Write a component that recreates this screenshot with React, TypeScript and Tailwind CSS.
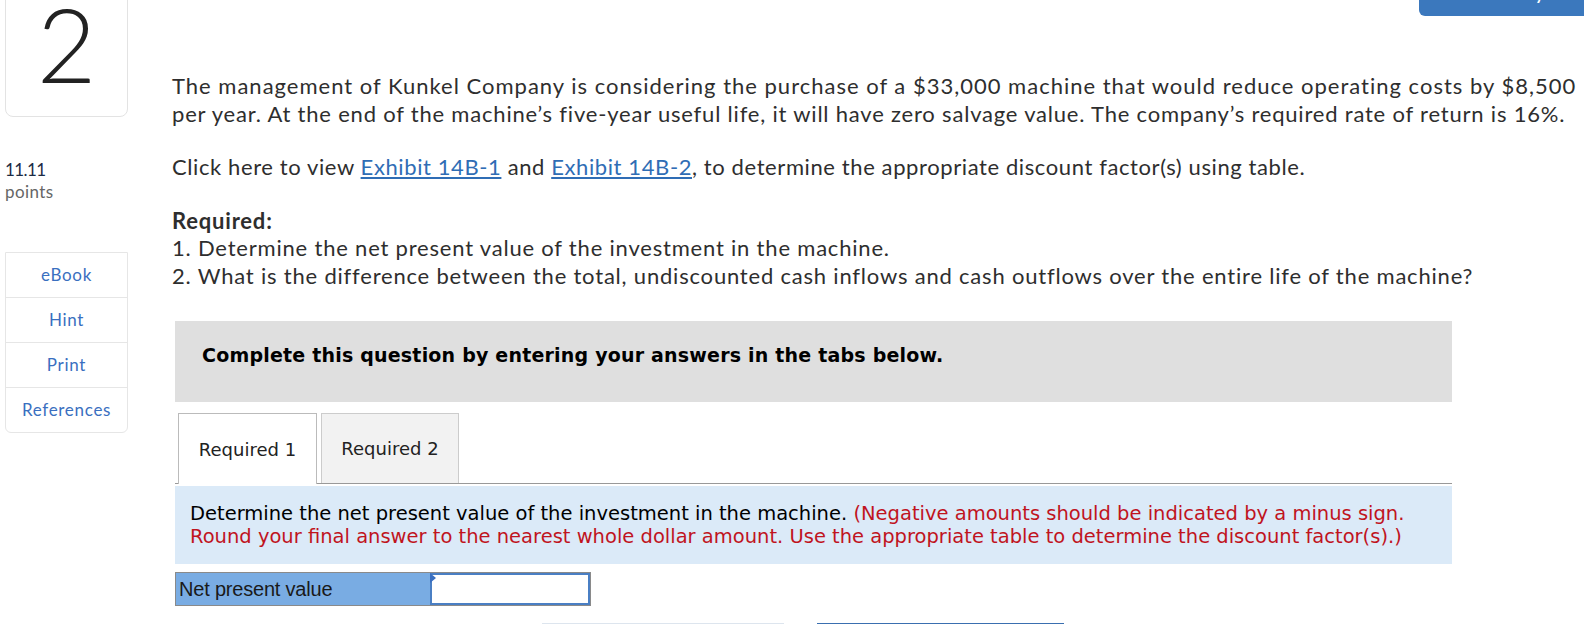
import React from "react";

const sideLinks = ["eBook", "Hint", "Print", "References"];

const QuestionCard = () => (
  <div className="flex flex-col w-[123px]">
    <div className="-mt-[39px] h-[140px] rounded-b-[8px] border border-[#e3e3e3] flex items-end justify-center pb-[21px]">
      <span className="font-['Lato',sans-serif] font-light text-[103px] leading-none text-[#222]">2</span>
    </div>
    <div className="mt-[42px] font-['Lato',sans-serif] text-[17px] leading-[22px]">
      <div className="text-[#1c2b45] tracking-[-0.6px]">11.11</div>
      <div className="text-[#666] tracking-[0.4px]">points</div>
    </div>
    <div className="mt-[49px] border border-[#e6e6e6] rounded-b-[6px] flex flex-col font-['Lato',sans-serif] text-[17px] tracking-[0.7px] text-[#3a6fc0]">
      {sideLinks.map((l, i) => (
        <div
          key={l}
          className={
            i < sideLinks.length - 1
              ? "h-[45px] flex items-center justify-center border-b border-[#e6e6e6]"
              : "h-[44px] flex items-center justify-center"
          }
        >
          {l}
        </div>
      ))}
    </div>
  </div>
);

const Tabs = () => (
  <div className="mt-[11px] flex items-end pl-[3px] border-b border-[#999] h-[71px] font-['DejaVu_Sans',Verdana,sans-serif] text-[18px] text-[#222]">
    <div className="w-[139px] h-[71px] -mb-px bg-white border border-b-0 border-[#bbb] flex items-center justify-center">
      Required 1
    </div>
    <div className="ml-[4px] w-[138px] h-[70px] bg-[#f2f2f2] border border-b-0 border-[#ccc] flex items-center justify-center">
      Required 2
    </div>
  </div>
);

const Question = () => (
  <div className="flex flex-col flex-1">
    <div className="pt-[56px] font-['Lato',sans-serif] text-[22px] leading-[28px] tracking-[0.8px] text-[#2e2e2e]">
      <p>
        <span className="tracking-[1px]">
          The management of Kunkel Company is considering the purchase of a $33,000 machine that would reduce operating costs by $8,500
        </span>
        <br />
        per year. At the end of the machine’s five-year useful life, it will have zero salvage value. The company’s required rate of return is 16%.
      </p>
      <p className="mt-[25px] tracking-[0.6px]">
        Click here to view <span className="text-[#2f6db5] underline underline-offset-2">Exhibit 14B-1</span> and{" "}
        <span className="text-[#2f6db5] underline underline-offset-2">Exhibit 14B-2</span>, to determine the appropriate discount factor(s) using table.
      </p>
      <p className="mt-[27px] leading-[26px] font-bold">Required:</p>
      <p>1. Determine the net present value of the investment in the machine.</p>
      <p>2. What is the difference between the total, undiscounted cash inflows and cash outflows over the entire life of the machine?</p>
    </div>

    <div className="ml-[3px] w-[1277px]">
      <div className="mt-[31px] h-[81px] bg-[#dfdfdf] pl-[27px] pt-[23px] font-['DejaVu_Sans',Verdana,sans-serif] font-bold text-[19px] leading-[22px] tracking-[0.2px] text-black">
        Complete this question by entering your answers in the tabs below.
      </div>

      <Tabs />

      <div className="mt-[2px] h-[78px] bg-[#dbeaf8] pl-[15px] pt-[16px] font-['DejaVu_Sans',Verdana,sans-serif] text-[19.5px] leading-[23px] text-black">
        Determine the net present value of the investment in the machine.{" "}
        <span className="text-[#c0141e]">
          (Negative amounts should be indicated by a minus sign.
          <br />
          Round your final answer to the nearest whole dollar amount. Use the appropriate table to determine the discount factor(s).)
        </span>
      </div>

      <div className="mt-[8px] flex w-[416px] h-[34px] border border-[#8a8a8a]">
        <div className="w-[254px] bg-[#79ace3] flex items-center pl-[3px] font-['Liberation_Sans',Arial,sans-serif] text-[20px] tracking-[-0.2px] text-[#1a1a1a]">
          Net present value
        </div>
        <div className="relative flex-1 bg-white border-2 border-[#4a7fc4]">
          <div className="absolute -top-[2px] -left-[2px] w-0 h-0 border-t-[5px] border-b-[5px] border-l-[6px] border-t-transparent border-b-transparent border-l-[#3a6fc0]" />
        </div>
      </div>

      <div className="mt-[17px] flex">
        <div className="ml-[367px] w-[242px] h-[40px] border-t border-x border-[#dde5ee]" />
        <div className="ml-[33px] w-[247px] h-[40px] border-t-2 border-x border-[#3a6fb0]" />
      </div>
    </div>
  </div>
);

export default function App() {
  return (
    <div className="w-[1584px] h-[624px] overflow-hidden bg-white">
      <div className="flex justify-end h-[16px]">
        <div className="-mt-[24px] w-[165px] h-[40px] rounded-bl-[6px] bg-[#3b78bd] flex items-end justify-center pb-[14px] pl-[54px] font-['Lato',sans-serif] font-bold text-[16px] leading-[16px] text-white">
          Check my work
        </div>
      </div>
      <div className="flex pl-[5px]">
        <QuestionCard />
        <div className="ml-[44px] flex-1 flex">
          <Question />
        </div>
      </div>
    </div>
  );
}
